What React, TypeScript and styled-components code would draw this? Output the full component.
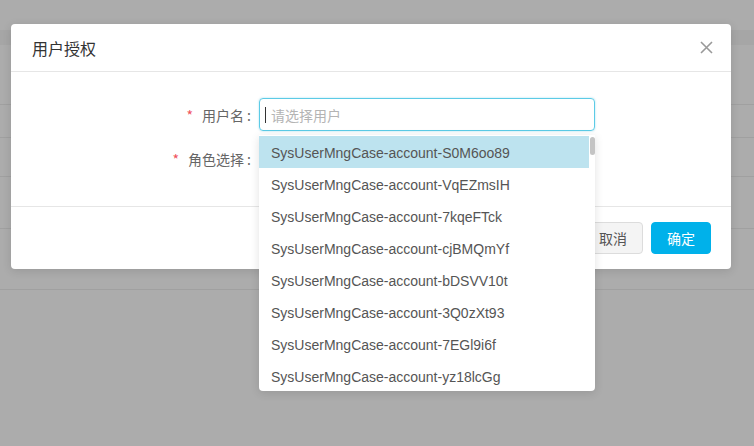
import React from "react";
import styled, { createGlobalStyle } from "styled-components";

const Global = createGlobalStyle`
  html, body { margin: 0; padding: 0; }
  body {
    width: 754px; height: 446px; overflow: hidden;
    font-family: "Liberation Sans", "Noto Sans CJK SC", Arial, sans-serif;
    background: #acacac;
  }
`;

const Page = styled.div`
  position: relative;
  width: 754px;
  height: 446px;
  overflow: hidden;
  background: #acacac;
`;

const BackTable = styled.div`
  display: flex;
  flex-direction: column;
  padding-top: 30px;
`;

const BackRow = styled.div<{ $h: number; $dark?: boolean }>`
  height: ${(p) => p.$h}px;
  background: ${(p) => (p.$dark ? "#a6a6a6" : "transparent")};
  border-bottom: 1px solid ${(p) => (p.$dark ? "transparent" : "#a0a0a0")};
  box-sizing: border-box;
`;

const Modal = styled.div`
  position: absolute;
  left: 11px;
  top: 24px;
  width: 720px;
  height: 245px;
  background: #fff;
  border-radius: 4px;
  box-shadow: 0 2px 10px rgba(0, 0, 0, 0.12);
  display: flex;
  flex-direction: column;
`;

const Header = styled.div`
  height: 48px;
  border-bottom: 1px solid #e6e6e6;
  display: flex;
  align-items: center;
  justify-content: space-between;
  padding: 0 17px 0 21px;
  box-sizing: border-box;
`;

const Title = styled.div`
  font-family: "Noto Sans CJK SC", sans-serif;
  font-size: 16px;
  color: #333;
`;

const Close = styled.button`
  border: none;
  background: none;
  padding: 0;
  width: 16px;
  height: 16px;
  display: flex;
  align-items: center;
  justify-content: center;
  cursor: pointer;
`;

const Body = styled.div`
  height: 135px;
  border-bottom: 1px solid #e6e6e6;
  box-sizing: border-box;
  padding-top: 26px;
  display: flex;
  flex-direction: column;
  gap: 11px;
`;

const FormRow = styled.div`
  display: flex;
  align-items: center;
  height: 33px;
`;

const Label = styled.div`
  width: 248px;
  padding-right: 8px;
  box-sizing: border-box;
  text-align: right;
  font-family: "Noto Sans CJK SC", sans-serif;
  font-size: 14px;
  color: #666;
`;

const Star = styled.span`
  color: #f0525c;
  margin-right: 9px;
`;

const Colon = styled.span`
  margin-left: 3px;
`;

const SelectWrap = styled.div`
  position: relative;
  width: 336px;
  height: 33px;
`;

const Input = styled.div`
  width: 100%;
  height: 100%;
  box-sizing: border-box;
  border: 1px solid #5ccbe6;
  border-radius: 4px;
  box-shadow: 0 0 2px rgba(60, 190, 225, 0.5);
  display: flex;
  align-items: center;
  padding-left: 5px;
`;

const Caret = styled.span`
  width: 1px;
  height: 16px;
  background: #333;
  margin-right: 5px;
`;

const Placeholder = styled.span`
  font-family: "Noto Sans CJK SC", sans-serif;
  font-size: 14px;
  color: #b4b4b4;
`;

const Dropdown = styled.div`
  position: absolute;
  left: 0;
  top: 37px;
  width: 336px;
  height: 256px;
  background: #fff;
  border-radius: 0 0 4px 4px;
  box-shadow: 0 2px 10px rgba(0, 0, 0, 0.12);
  z-index: 10;
  display: flex;
  overflow: hidden;
`;

const List = styled.div`
  flex: 1;
  display: flex;
  flex-direction: column;
  padding-top: 1px;
`;

const Item = styled.div<{ $active?: boolean }>`
  height: 32px;
  flex-shrink: 0;
  display: flex;
  align-items: center;
  padding-left: 12px;
  padding-top: 1px;
  box-sizing: border-box;
  font-size: 14px;
  color: #555;
  background: ${(p) => (p.$active ? "#bde3ef" : "transparent")};
`;

const ScrollTrack = styled.div`
  width: 6px;
  padding-top: 2px;
  display: flex;
  justify-content: center;
`;

const Thumb = styled.div`
  width: 5px;
  height: 18px;
  border-radius: 3px;
  background: #c4c4c4;
`;

const Footer = styled.div`
  flex: 1;
  display: flex;
  align-items: center;
  justify-content: flex-end;
  gap: 8px;
  padding-right: 20px;
`;

const Button = styled.button<{ $primary?: boolean }>`
  width: 60px;
  height: 32px;
  border-radius: 4px;
  font-family: "Noto Sans CJK SC", sans-serif;
  font-size: 14px;
  border: 1px solid ${(p) => (p.$primary ? "#00b1ea" : "#dcdcdc")};
  background: ${(p) => (p.$primary ? "#00b1ea" : "#f4f4f4")};
  color: ${(p) => (p.$primary ? "#fff" : "#555")};
  padding: 0;
`;

const users = [
  "SysUserMngCase-account-S0M6oo89",
  "SysUserMngCase-account-VqEZmsIH",
  "SysUserMngCase-account-7kqeFTck",
  "SysUserMngCase-account-cjBMQmYf",
  "SysUserMngCase-account-bDSVV10t",
  "SysUserMngCase-account-3Q0zXt93",
  "SysUserMngCase-account-7EGl9i6f",
  "SysUserMngCase-account-yz18lcGg",
];

export default function App() {
  return (
    <Page>
      <Global />
      <BackTable>
        <BackRow $h={15} $dark />
        <BackRow $h={60} />
        <BackRow $h={33} />
        <BackRow $h={39} />
        <BackRow $h={52} />
        <BackRow $h={61} />
      </BackTable>
      <Modal>
        <Header>
          <Title>用户授权</Title>
          <Close aria-label="close">
            <svg width="13" height="13" viewBox="0 0 13 13">
              <path d="M1 1 L12 12 M12 1 L1 12" stroke="#999" strokeWidth="1.6" />
            </svg>
          </Close>
        </Header>
        <Body>
          <FormRow>
            <Label>
              <Star>*</Star>用户名<Colon>:</Colon>
            </Label>
            <SelectWrap>
              <Input>
                <Caret />
                <Placeholder>请选择用户</Placeholder>
              </Input>
              <Dropdown>
                <List>
                  {users.map((u, i) => (
                    <Item key={u} $active={i === 0}>
                      {u}
                    </Item>
                  ))}
                </List>
                <ScrollTrack>
                  <Thumb />
                </ScrollTrack>
              </Dropdown>
            </SelectWrap>
          </FormRow>
          <FormRow>
            <Label>
              <Star>*</Star>角色选择<Colon>:</Colon>
            </Label>
          </FormRow>
        </Body>
        <Footer>
          <Button>取消</Button>
          <Button $primary>确定</Button>
        </Footer>
      </Modal>
    </Page>
  );
}
